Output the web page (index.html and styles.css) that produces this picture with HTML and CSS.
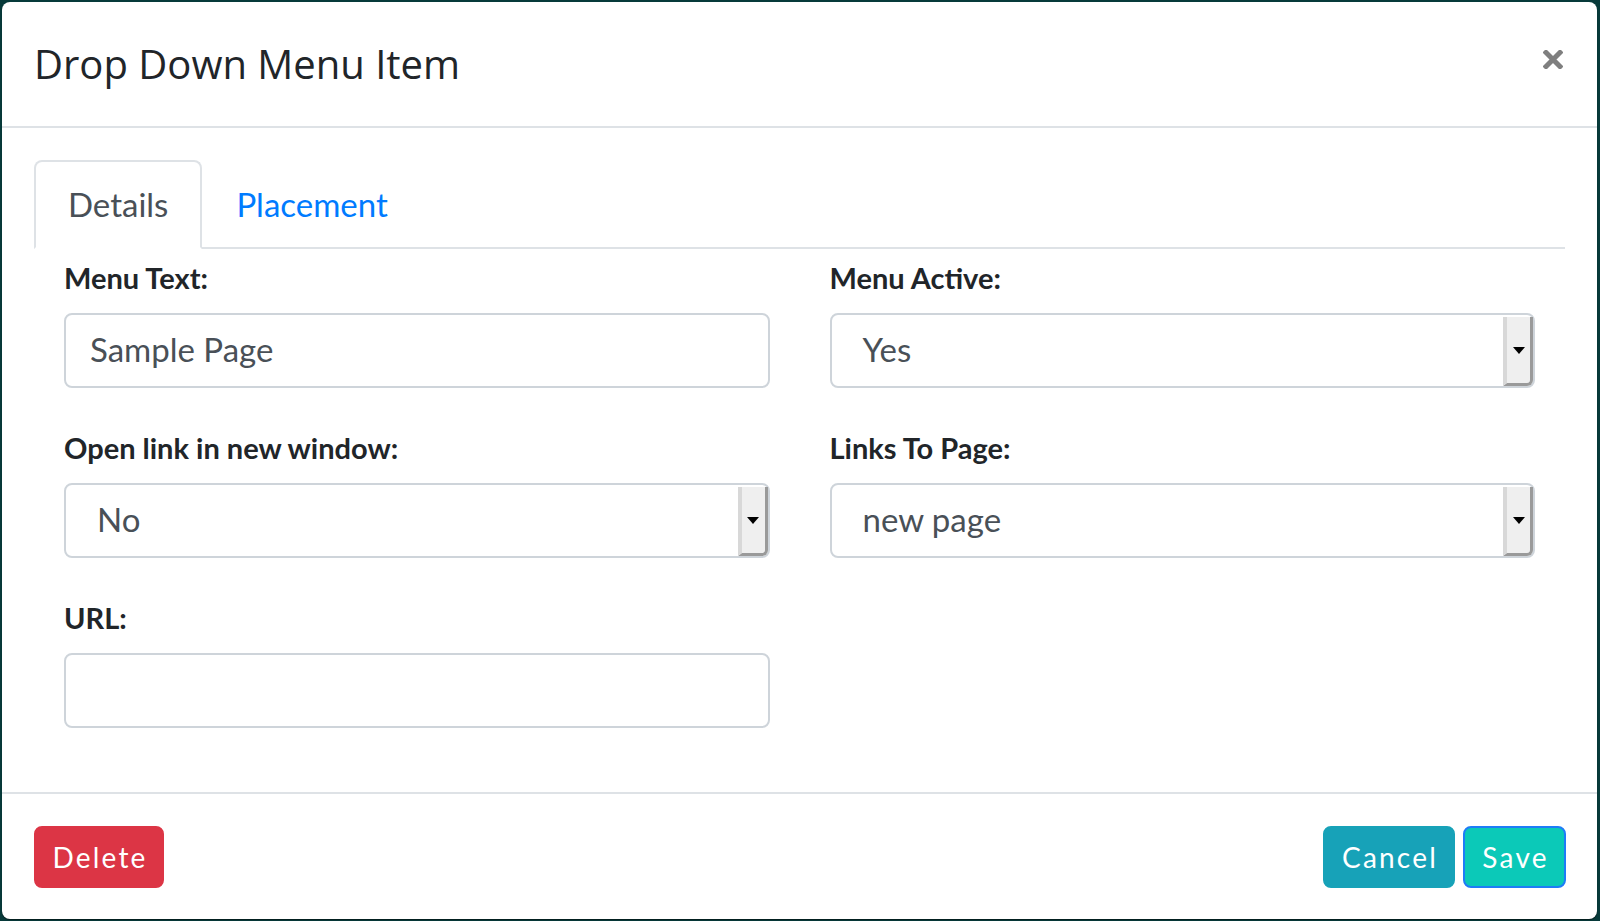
FILE: index.html
```html
<!DOCTYPE html>
<html lang="en">
<head>
<meta charset="utf-8">
<title>Drop Down Menu Item</title>
<link rel="stylesheet" href="styles.css">
</head>
<body>
<div class="modal">
  <div class="modal-header">
    <h5 class="modal-title">Drop Down Menu Item</h5>
    <button class="close" type="button" aria-label="Close">
      <svg width="20" height="19" viewBox="0 0 20 19"><path d="M3 2.5 L17 16.5 M17 2.5 L3 16.5" stroke="#7f7f7f" stroke-width="5" stroke-linecap="square"/></svg>
    </button>
  </div>
  <div class="modal-body">
    <ul class="nav-tabs">
      <li class="tab active">Details</li>
      <li class="tab">Placement</li>
    </ul>
    <div class="form">
      <div class="group">
        <label class="lbl">Menu Text:</label>
        <div class="control"><span class="val">Sample Page</span></div>
      </div>
      <div class="group">
        <label class="lbl">Menu Active:</label>
        <div class="control select"><span class="val">Yes</span><span class="sel-btn"><span class="arrow"></span></span></div>
      </div>
      <div class="group">
        <label class="lbl">Open link in new window:</label>
        <div class="control select"><span class="val">No</span><span class="sel-btn"><span class="arrow"></span></span></div>
      </div>
      <div class="group">
        <label class="lbl">Links To Page:</label>
        <div class="control select"><span class="val">new page</span><span class="sel-btn"><span class="arrow"></span></span></div>
      </div>
      <div class="group">
        <label class="lbl">URL:</label>
        <div class="control"><span class="val"></span></div>
      </div>
    </div>
  </div>
  <div class="modal-footer">
    <button class="btn btn-danger" type="button">Delete</button>
    <div class="right-btns">
      <button class="btn btn-info" type="button">Cancel</button>
      <button class="btn btn-save" type="button">Save</button>
    </div>
  </div>
</div>
</body>
</html>
```
FILE: styles.css
```css
* { box-sizing: border-box; }
html, body { margin: 0; padding: 0; }
body {
  background: #073a3a;
  width: 1600px;
  height: 921px;
  overflow: hidden;
  padding: 2px 3px 2px 2px;
  font-family: "Lato", "Open Sans", sans-serif;
}
.modal {
  background: #fff;
  height: 917px;
  border-radius: 8px;
  display: flex;
  flex-direction: column;
  box-shadow: 0 1px 1px rgba(0,0,0,0.5);
}
.modal-header {
  display: flex;
  justify-content: space-between;
  align-items: flex-start;
  padding: 32px 32px;
  border-bottom: 2px solid #dee2e6;
  height: 126px;
}
.modal-title {
  margin: 0;
  font-family: "Open Sans", sans-serif;
  font-weight: 400;
  font-size: 40px;
  line-height: 60px;
  color: #212529;
}
.close {
  border: 0;
  background: none;
  padding: 0;
  margin: 16px 2px 0 0;
  width: 20px;
  height: 19px;
  display: block;
}
.close svg { display: block; }
.modal-body {
  flex: 1;
  padding: 32px 32px 0;
}
.nav-tabs {
  list-style: none;
  margin: 0;
  padding: 0;
  display: flex;
  border-bottom: 2px solid #dee2e6;
  height: 89px;
}
.tab {
  padding: 18px 32px;
  font-size: 33px;
  line-height: 49px;
  color: #007bff;
  border: 2px solid transparent;
  border-top-left-radius: 8px;
  border-top-right-radius: 8px;
  height: 89px;
}
.tab.active {
  color: #495057;
  border-color: #dee2e6 #dee2e6 #fff;
  background: #fff;
}
.form {
  display: grid;
  grid-template-columns: 1fr 1fr;
  column-gap: 60px;
  row-gap: 39px;
  padding: 8px 30px 0;
}
.group {
  display: flex;
  flex-direction: column;
}
.lbl {
  font-weight: 700;
  font-size: 29px;
  line-height: 42px;
  color: #212529;
  margin-bottom: 14px;
}
.control {
  height: 75px;
  border: 2px solid #ced4da;
  border-radius: 8px;
  display: flex;
  align-items: center;
  padding: 0 24px 3px;
  font-size: 33px;
  color: #495057;
}
.control.select {
  padding: 0 0 0 31px;
}
.control.select .val { padding-bottom: 3px; }
.val { flex: 1; }
.sel-btn {
  width: 30px;
  align-self: stretch;
  margin: 2px 0 0 0;
  background: #efefef;
  border-left: 4px solid #d8d8d8;
  border-right: 3px solid #9a9a9a;
  border-bottom: 3px solid #9a9a9a;
  border-bottom-right-radius: 6px;
  display: flex;
  align-items: center;
  justify-content: center;
}
.arrow {
  width: 0;
  height: 0;
  border-left: 6px solid transparent;
  border-right: 6px solid transparent;
  border-top: 7px solid #000;
}
.modal-footer {
  border-top: 2px solid #dee2e6;
  padding: 32px 31px 31px 32px;
  display: flex;
  justify-content: space-between;
  align-items: center;
}
.right-btns { display: flex; gap: 8px; }
.btn {
  height: 62px;
  border: 2px solid transparent;
  border-radius: 8px;
  color: #fff;
  font-family: "Lato", "Open Sans", sans-serif;
  font-size: 28px;
  letter-spacing: 2.2px;
  padding: 0 0 0 2px;
  text-align: center;
  line-height: 56px;
}
.btn-danger { background: #dc3545; border-color: #dc3545; width: 130px; }
.btn-info { background: #17a2b8; border-color: #17a2b8; width: 132px; }
.btn-save { background: #0bc9b8; border-color: #1e7cf7; width: 103px; }
```
